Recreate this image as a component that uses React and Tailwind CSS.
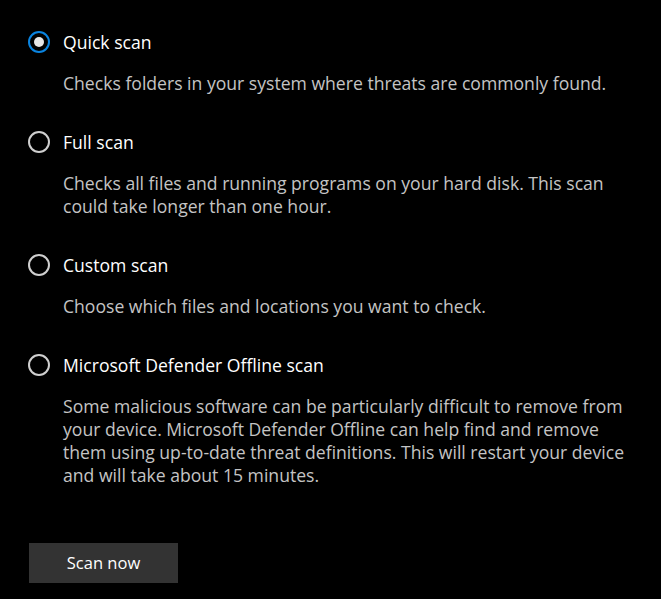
import React, { useState } from 'react';

const options = [
    {
        id: 'quick',
        label: 'Quick scan',
        description: 'Checks folders in your system where threats are commonly found.',
    },
    {
        id: 'full',
        label: 'Full scan',
        description: 'Checks all files and running programs on your hard disk. This scan could take longer than one hour.',
    },
    {
        id: 'custom',
        label: 'Custom scan',
        description: 'Choose which files and locations you want to check.',
    },
    {
        id: 'offline',
        label: 'Microsoft Defender Offline scan',
        description: 'Some malicious software can be particularly difficult to remove from your device. Microsoft Defender Offline can help find and remove them using up-to-date threat definitions. This will restart your device and will take about 15 minutes.',
    },
];

const Radio = ({ checked }) => (
    <span
        className={checked
            ? "w-[22px] h-[22px] rounded-full border-2 border-[#0a84e0] flex items-center justify-center shrink-0"
            : "w-[22px] h-[22px] rounded-full border-2 border-[#cfcfcf] flex items-center justify-center shrink-0"}
    >
        {checked && <span className="w-[10px] h-[10px] rounded-full bg-[#e6e6e6]" />}
    </span>
);

const App = () => {
    const [selected, setSelected] = useState('quick');

    return (
        <section
            className="min-h-[599px] bg-black text-white pl-[28px] pr-[20px] pt-[30px]"
            style={{ fontFamily: '"Open Sans", "Noto Sans", sans-serif' }}
        >
            <div className="flex flex-col gap-[35px]">
                {
                    options.map((o) => (
                        <div key={o.id}>
                            <button
                                onClick={() => setSelected(o.id)}
                                className="flex items-center gap-[13px] h-[24px] text-[17.6px] text-white"
                            >
                                <Radio checked={selected === o.id} />
                                <span>{o.label}</span>
                            </button>
                            <p className="ml-[35px] mt-[18px] text-[17.6px] leading-[23px] text-[#c4c4c4] max-w-[575px]">
                                {o.description}
                            </p>
                        </div>
                    ))
                }
            </div>
            <button className="mt-[56px] ml-[1px] w-[149px] h-[40px] bg-[#333333] text-[16.5px] text-white">
                Scan now
            </button>
        </section>
    )
};

export default App;
